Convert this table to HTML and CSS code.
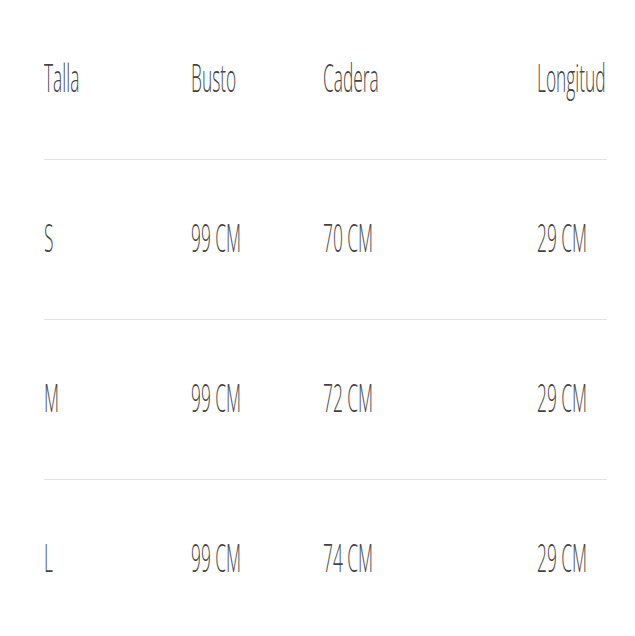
FILE: index.html
```html
<!DOCTYPE html>
<html lang="es">
<head>
<meta charset="utf-8">
<title>Tabla de tallas</title>
<link rel="stylesheet" href="styles.css">
</head>
<body>
<div class="size-table">
  <div class="row">
    <div class="cell"><span class="txt">Talla</span></div>
    <div class="cell"><span class="txt">Busto</span></div>
    <div class="cell"><span class="txt">Cadera</span></div>
    <div class="cell"><span class="txt">Longitud</span></div>
  </div>
  <div class="row">
    <div class="cell"><span class="txt">S</span></div>
    <div class="cell"><span class="txt">99 CM</span></div>
    <div class="cell"><span class="txt">70 CM</span></div>
    <div class="cell"><span class="txt">29 CM</span></div>
  </div>
  <div class="row">
    <div class="cell"><span class="txt">M</span></div>
    <div class="cell"><span class="txt">99 CM</span></div>
    <div class="cell"><span class="txt">72 CM</span></div>
    <div class="cell"><span class="txt">29 CM</span></div>
  </div>
  <div class="row last">
    <div class="cell"><span class="txt">L</span></div>
    <div class="cell"><span class="txt">99 CM</span></div>
    <div class="cell"><span class="txt">74 CM</span></div>
    <div class="cell"><span class="txt">29 CM</span></div>
  </div>
</div>
</body>
</html>
```
FILE: styles.css
```css
html, body {
  margin: 0;
  padding: 0;
  background: #ffffff;
}
body {
  overflow: hidden;
}
.size-table {
  margin-left: 44px;
  width: 591px;
  overflow: hidden;
}
.row {
  display: grid;
  grid-template-columns: 147px 132px 214px 70px;
  width: 563px;
  height: 153px;
  padding-bottom: 6px;
  border-bottom: 1px solid #e3e3e3;
  align-items: center;
}
.row.last {
  border-bottom: none;
}
.cell {
  white-space: nowrap;
  overflow: visible;
  font-family: "Open Sans", "Noto Sans", sans-serif;
  font-weight: 300;
  font-size: 39px;
  line-height: 1;
  color: #444444;
}
.txt {
  display: inline-block;
  transform: scaleX(0.445);
  transform-origin: left center;
}
```
